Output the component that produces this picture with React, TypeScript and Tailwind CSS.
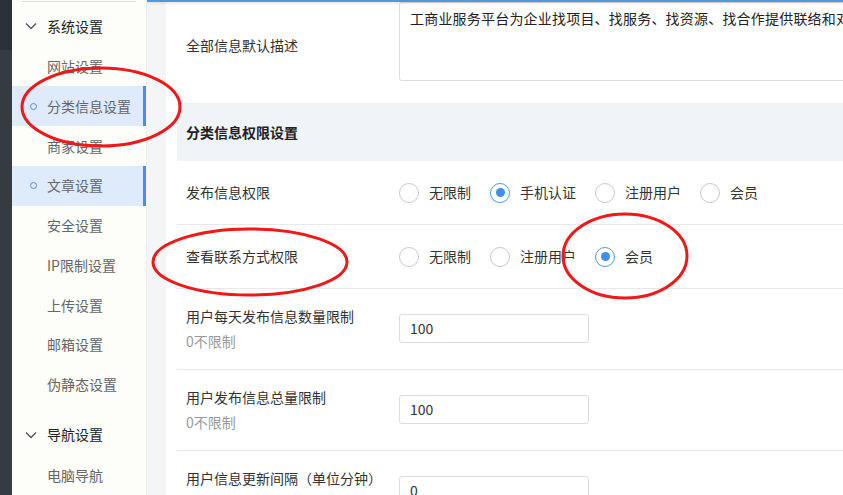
import React from 'react';

type NavItem = { label: string; active?: boolean };

const systemItems: NavItem[] = [
  { label: '网站设置' },
  { label: '分类信息设置', active: true },
  { label: '商家设置' },
  { label: '文章设置', active: true },
  { label: '安全设置' },
  { label: 'IP限制设置' },
  { label: '上传设置' },
  { label: '邮箱设置' },
  { label: '伪静态设置' },
];

function Chevron() {
  return (
    <svg width="12" height="8" viewBox="0 0 12 8" className="mr-[10px] shrink-0">
      <polyline points="1,1.5 6,6.5 11,1.5" fill="none" stroke="#4a5563" strokeWidth="1.3" />
    </svg>
  );
}

function GroupHeader({ label }: { label: string }) {
  return (
    <div className="h-[41px] flex items-center pl-[13px] text-[#222] whitespace-nowrap">
      <Chevron />
      <span>{label}</span>
    </div>
  );
}

function SideItem({ item }: { item: NavItem }) {
  return (
    <div
      className={`h-10 flex items-center pl-[18px] whitespace-nowrap ${
        item.active ? 'bg-[#dfeafb] border-r-[3px] border-[#4a8ef0]' : ''
      }`}
    >
      <span className="w-[17px] shrink-0 flex items-center">
        {item.active && <span className="block w-[7px] h-[7px] rounded-full border border-[#4a8ef0]" />}
      </span>
      <span className="text-[#666]">{item.label}</span>
    </div>
  );
}

function Radio({ label, checked }: { label: string; checked?: boolean }) {
  return (
    <label className="flex items-center mr-[19px] whitespace-nowrap">
      <span
        className={`w-5 h-5 shrink-0 rounded-full border flex items-center justify-center bg-white ${
          checked ? 'border-[#4b9be8]' : 'border-[#c8c8c8]'
        }`}
      >
        {checked && <span className="block w-[9px] h-[9px] rounded-full bg-[#3f8ef0]" />}
      </span>
      <span className="ml-[10px] text-[#333]">{label}</span>
    </label>
  );
}

function NumberRow({ label, value, hint }: { label: string; value: string; hint?: string }) {
  return (
    <div className="h-[81px] flex items-start border-t border-[#e8e8e8]">
      <div className="w-[222px] shrink-0 pl-[9px] leading-[25px] mt-[15px] whitespace-nowrap">
        <div className="text-[#333]">{label}</div>
        {hint && <div className="text-[#999]">{hint}</div>}
      </div>
      <div className="w-[190px] h-[29px] shrink-0 border border-[#dcdcdc] rounded-[3px] pl-[10px] flex items-center text-[#333] mt-[25px]">
        {value}
      </div>
    </div>
  );
}

export default function App() {
  return (
    <div className="relative flex w-[843px] h-[495px] overflow-hidden text-[14px] font-['Noto_Sans_CJK_SC',sans-serif]">
      {/* dark rail */}
      <div className="w-[12px] shrink-0 flex flex-col">
        <div className="h-[50px] bg-[#2b3039]" />
        <div className="flex-1 bg-[#363b42]" />
      </div>

      {/* sidebar */}
      <aside className="w-[134px] shrink-0 bg-[#fdfdf9] flex flex-col">
        <div className="h-[1px] mt-[1px] mx-[10px] bg-[#dedede]" />
        <div className="h-[4px]" />
        <GroupHeader label="系统设置" />
        {systemItems.map((it) => (
          <SideItem key={it.label} item={it} />
        ))}
        <div className="h-[10px]" />
        <GroupHeader label="导航设置" />
        <SideItem item={{ label: '电脑导航' }} />
      </aside>

      {/* main */}
      <main className="relative flex-1 min-w-0 bg-[#f4f5f7] border-l border-[#eceef1] pl-[19px]">
        <div className="absolute top-0 left-0 right-0 h-[2px] bg-[#4a9be3] shadow-[0_1px_3px_rgba(0,0,0,0.15)]" />
        <div className="h-full bg-white pl-[11px] overflow-hidden">
          {/* description */}
          <div className="h-[103px] flex items-start">
            <div className="w-[222px] shrink-0 pl-[9px] mt-[35px] leading-[20px] text-[#333]">全部信息默认描述</div>
            <div className="mt-[2px] h-[79px] w-[520px] shrink-0 border border-[#dcdcdc] rounded-[3px] pl-[10px] pt-[5px] leading-[20px] tracking-[0.2px] text-[#222] whitespace-nowrap overflow-hidden">
              工商业服务平台为企业找项目、找服务、找资源、找合作提供联络和对接服务
            </div>
          </div>

          {/* section header */}
          <div className="h-[58px] bg-[#f0f3f7] flex items-center pl-[9px] font-bold text-[#222]">
            分类信息权限设置
          </div>

          <div className="h-[63px] flex items-center">
            <div className="w-[222px] shrink-0 pl-[9px] text-[#333]">发布信息权限</div>
            <Radio label="无限制" />
            <Radio label="手机认证" checked />
            <Radio label="注册用户" />
            <Radio label="会员" />
          </div>

          <div className="h-[64px] flex items-center border-t border-[#e8e8e8]">
            <div className="w-[222px] shrink-0 pl-[9px] text-[#333]">查看联系方式权限</div>
            <Radio label="无限制" />
            <Radio label="注册用户" />
            <Radio label="会员" checked />
          </div>

          <NumberRow label="用户每天发布信息数量限制" value="100" hint="0不限制" />
          <NumberRow label="用户发布信息总量限制" value="100" hint="0不限制" />
          <NumberRow label="用户信息更新间隔（单位分钟）" value="0" hint="0不限制" />
        </div>
      </main>

      {/* red annotation marks */}
      <svg className="absolute inset-0 pointer-events-none" width="843" height="495">
        <ellipse cx="101" cy="107" rx="79" ry="39" fill="none" stroke="#f01818" strokeWidth="3" />
        <ellipse cx="250" cy="262" rx="97" ry="33" fill="none" stroke="#f01818" strokeWidth="3" />
        <ellipse cx="625" cy="256" rx="62" ry="42" fill="none" stroke="#f01818" strokeWidth="3" />
      </svg>
    </div>
  );
}
